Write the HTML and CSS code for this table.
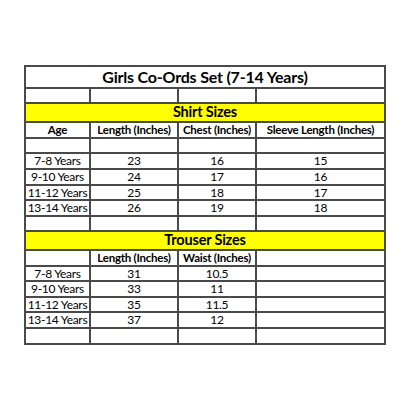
FILE: index.html
```html
<!DOCTYPE html>
<html lang="en">
<head>
<meta charset="UTF-8" />
<meta name="viewport" content="width=device-width, initial-scale=1" />
<title>Girls Co-Ords Set Size Chart</title>
<link rel="stylesheet" href="styles.css">
</head>
<body>
  <table class="chart">
    <colgroup>
      <col class="c-age" />
      <col class="c-length" />
      <col class="c-chest" />
      <col class="c-sleeve" />
    </colgroup>
    <tr class="r-title"><td colspan="4" class="title">Girls Co-Ords Set (7-14 Years)</td></tr>
    <tr class="r15"><td></td><td></td><td></td><td></td></tr>
    <tr class="r-band"><td colspan="4" class="band">Shirt Sizes</td></tr>
    <tr class="r16 head"><td>Age</td><td>Length (Inches)</td><td>Chest (Inches)</td><td>Sleeve Length (Inches)</td></tr>
    <tr class="r15"><td></td><td></td><td></td><td></td></tr>
    <tr class="r16"><td>7-8 Years</td><td>23</td><td>16</td><td>15</td></tr>
    <tr class="r16"><td>9-10 Years</td><td>24</td><td>17</td><td>16</td></tr>
    <tr class="r15"><td>11-12 Years</td><td>25</td><td>18</td><td>17</td></tr>
    <tr class="r16"><td>13-14 Years</td><td>26</td><td>19</td><td>18</td></tr>
    <tr class="r15"><td></td><td></td><td></td><td></td></tr>
    <tr class="r-band"><td colspan="4" class="band">Trouser Sizes</td></tr>
    <tr class="r16 head"><td></td><td>Length (Inches)</td><td>Waist (Inches)</td><td></td></tr>
    <tr class="r15"><td>7-8 Years</td><td>31</td><td>10.5</td><td></td></tr>
    <tr class="r16"><td>9-10 Years</td><td>33</td><td>11</td><td></td></tr>
    <tr class="r15"><td>11-12 Years</td><td>35</td><td>11.5</td><td></td></tr>
    <tr class="r16"><td>13-14 Years</td><td>37</td><td>12</td><td></td></tr>
    <tr class="r16"><td></td><td></td><td></td><td></td></tr>
  </table>
</body>
</html>
```

FILE: styles.css
```css
body {
  margin: 0;
  background: #fff;
  font-family: Lato, "Open Sans", sans-serif;
  color: #000;
}
.chart {
  margin: 65px 0 0 24px;
  border-collapse: collapse;
  table-layout: fixed;
  border: 2px solid #1a1a1a;
}
.c-age { width: 65px; }
.c-length { width: 88px; }
.c-chest { width: 78px; }
.c-sleeve { width: 129px; }
.chart td {
  border: 2px solid #4a4a4a;
  padding: 0;
  text-align: center;
  font-size: 12px;
  letter-spacing: -0.3px;
  line-height: 1;
  white-space: nowrap;
  overflow: hidden;
}
.r-title { height: 22px; }
.r-band { height: 19px; }
.r15 { height: 15px; }
.r16 { height: 16px; }
.chart .title {
  font-size: 16px;
  font-weight: 700;
  letter-spacing: -0.2px;
}
.chart .band {
  background: #ffff00;
  font-size: 14.5px;
  font-weight: 700;
  letter-spacing: -0.2px;
}
.chart .head td {
  font-weight: 700;
  font-size: 11.5px;
  letter-spacing: -0.25px;
}
```
